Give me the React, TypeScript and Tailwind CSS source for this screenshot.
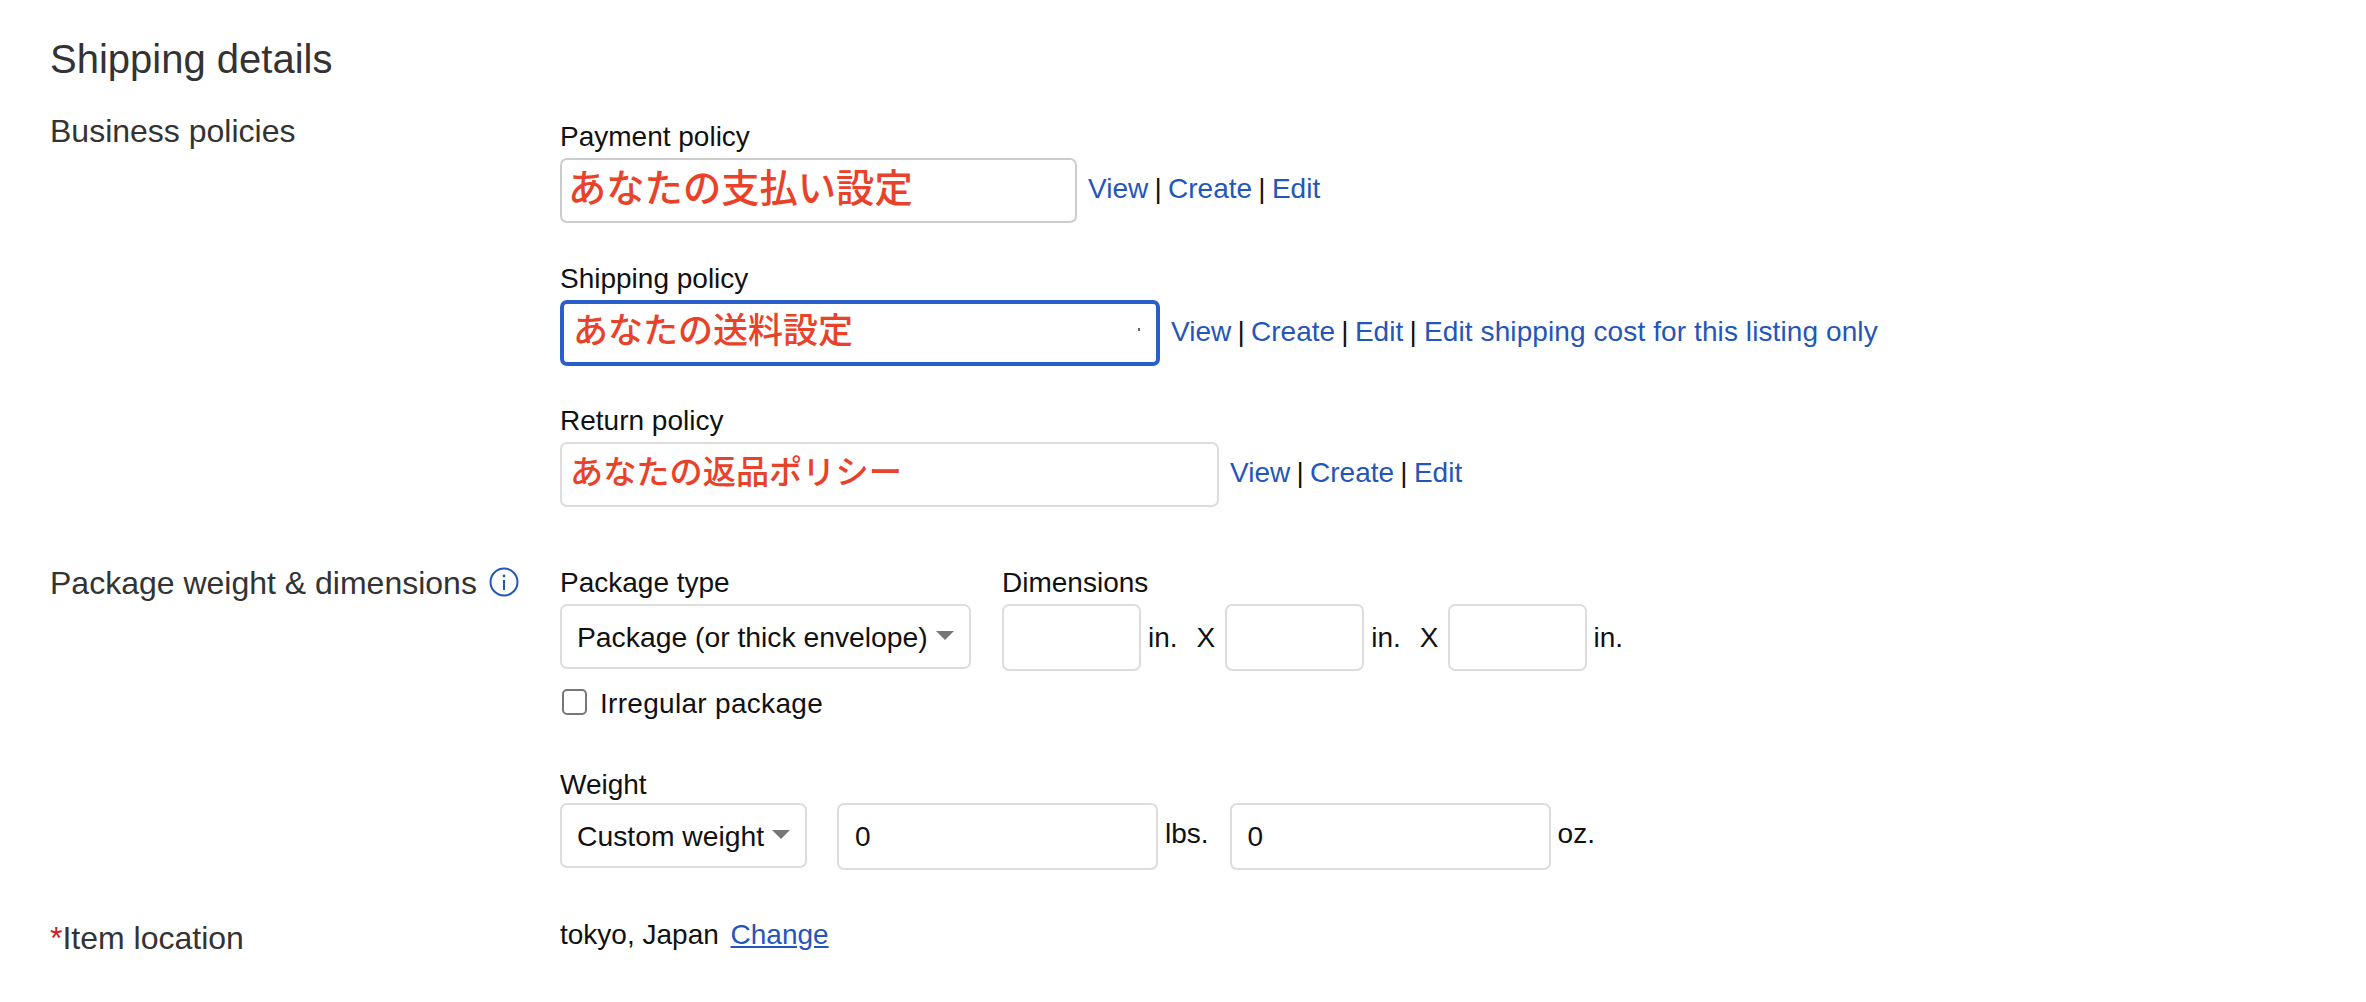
const font = "font-['Liberation_Sans','Noto_Sans_CJK_JP',sans-serif]";

const Links = ({ items }: { items: string[] }) => (
    <div className="ml-[11px] mt-[-3px] text-[28px] leading-[32px] text-[#111]">
        {items.map((item, i) => (
            <span key={item}>
                {i > 0 && <span className="mx-[-1.5px]"> | </span>}
                <a href="/#" className={i === 3 ? "ml-[1px] tracking-[0.1px] text-[#2456b9]" : "text-[#2456b9]"}>
                    {item}
                </a>
            </span>
        ))}
    </div>
);

const PolicyBox = ({ text, className }: { text: string; className: string }) => (
    <div className={`flex items-center rounded-[7px] bg-white font-medium font-['Liberation_Sans','Noto_Sans_CJK_JP',sans-serif] text-[#e8432a] ${className}`}>
        <span className="mt-[-4px]">{text}</span>
    </div>
);

const SelectBox = ({ label, className }: { label: string; className: string }) => (
    <div className={`flex h-[65px] items-center rounded-[7px] border-2 border-[#dddddd] pl-[15px] text-[28.3px] text-[#111] ${className}`}>
        <span>{label}</span>
        <svg className="ml-[8px] mt-[-3px] h-[9px] w-[18px]" viewBox="0 0 18 9">
            <polygon points="0,0 18,0 9,9" fill="#777777" />
        </svg>
    </div>
);

const TextBox = ({ value, className }: { value?: string; className: string }) => (
    <div className={`flex h-[67px] items-center rounded-[7px] border-2 border-[#dddddd] pl-[16px] text-[28px] text-[#111] ${className}`}>
        {value}
    </div>
);

const Unit = ({ text, className }: { text: string; className: string }) => (
    <span className={`text-[28px] leading-[32px] text-[#111] ${className}`}>{text}</span>
);

const App = () => {
    return (
        <div className={`h-[1002px] w-[2366px] overflow-hidden bg-white pl-[50px] pt-[36px] ${font}`}>
            <h2 className="text-[40px] font-normal leading-[46px] text-[#333333]">Shipping details</h2>

            <div className="mt-[34px] flex">
                <div className="w-[510px] text-[32px] leading-[30px] text-[#333333]">Business policies</div>
                <div className="pt-[6px] text-[28px] leading-[30px] text-[#111]">
                    <div>Payment policy</div>
                    <div className="mt-[6px] flex items-center">
                        <PolicyBox
                            text="あなたの支払い設定"
                            className="h-[65px] w-[517px] border-2 border-[#cccccc] pl-[6px] text-[38.3px]"
                        />
                        <Links items={["View", "Create", "Edit"]} />
                    </div>

                    <div className="mt-[41px]">Shipping policy</div>
                    <div className="mt-[6px] flex items-center">
                        <div className="relative">
                            <PolicyBox
                                text="あなたの送料設定"
                                className="h-[66px] w-[600px] border-[4px] border-[#2a5fc9] pl-[9px] text-[35px]"
                            />
                            <span className="absolute left-[578px] top-[28px] h-[3px] w-[2px] bg-[#666666]" />
                        </div>
                        <Links items={["View", "Create", "Edit", "Edit shipping cost for this listing only"]} />
                    </div>

                    <div className="mt-[40px]">Return policy</div>
                    <div className="mt-[6px] flex items-center">
                        <PolicyBox
                            text="あなたの返品ポリシー"
                            className="h-[65px] w-[659px] border-2 border-[#dddddd] pl-[8px] text-[33.2px]"
                        />
                        <Links items={["View", "Create", "Edit"]} />
                    </div>
                </div>
            </div>

            <div className="mt-[61px] flex">
                <div className="flex w-[510px] items-start text-[32px] leading-[30px] text-[#333333]">
                    <span>Package weight &amp; dimensions</span>
                    <svg className="ml-[12px] mt-[-1px] h-[30px] w-[30px]" viewBox="0 0 30 30" fill="none">
                        <circle cx="15" cy="15" r="13.5" stroke="#2456b9" strokeWidth="2" />
                        <circle cx="15" cy="9" r="1.4" fill="#2456b9" />
                        <rect x="14" y="13" width="2" height="10" fill="#2456b9" />
                    </svg>
                </div>
                <div className="text-[28px] leading-[30px] text-[#111]">
                    <div className="flex">
                        <div className="w-[442px]">
                            <div>Package type</div>
                            <SelectBox label="Package (or thick envelope)" className="mt-[6px] w-[411px]" />
                            <div className="mt-[20px] flex items-center">
                                <span className="ml-[2px] mt-[-4px] h-[26px] w-[25px] rounded-[5px] border-2 border-[#777777]" />
                                <span className="ml-[13px] tracking-[0.3px]">Irregular package</span>
                            </div>
                        </div>
                        <div>
                            <div>Dimensions</div>
                            <div className="mt-[6px] flex items-center">
                                <TextBox className="w-[139px]" />
                                <Unit text="in." className="ml-[7px]" />
                                <Unit text="X" className="ml-[19px]" />
                                <TextBox className="ml-[10px] w-[139px]" />
                                <Unit text="in." className="ml-[7px]" />
                                <Unit text="X" className="ml-[19px]" />
                                <TextBox className="ml-[9px] w-[139px]" />
                                <Unit text="in." className="ml-[7px]" />
                            </div>
                        </div>
                    </div>

                    <div className="mt-[51px]">Weight</div>
                    <div className="mt-[3px] flex items-start">
                        <SelectBox label="Custom weight" className="w-[247px]" />
                        <TextBox value="0" className="ml-[30px] w-[321px]" />
                        <Unit text="lbs." className="ml-[7px] mt-[15px]" />
                        <TextBox value="0" className="ml-[21px] w-[321px]" />
                        <Unit text="oz." className="ml-[7px] mt-[15px]" />
                    </div>
                </div>
            </div>

            <div className="mt-[50px] flex">
                <div className="w-[510px] text-[32px] leading-[36px] text-[#333333]">
                    <span className="text-[#d02020]">*</span>Item location
                </div>
                <div className="mt-[-1px] text-[28px] leading-[32px] text-[#111]">
                    tokyo, Japan{" "}
                    <a href="/#" className="ml-[4px] text-[#2456b9] underline">
                        Change
                    </a>
                </div>
            </div>
        </div>
    );
};

export default App;
